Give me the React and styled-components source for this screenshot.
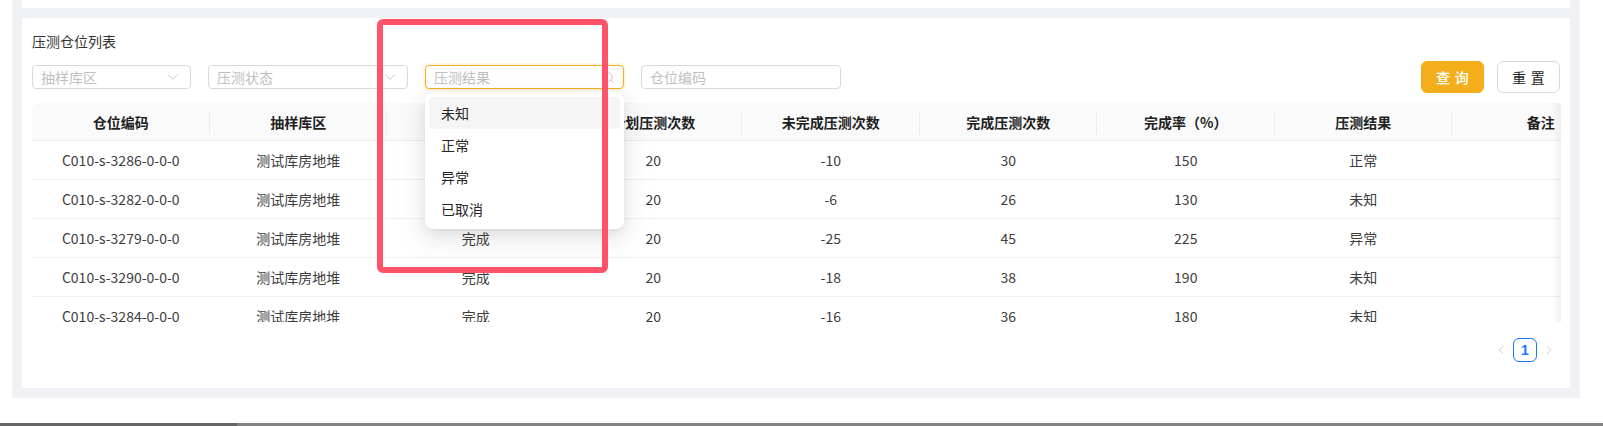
import styled, { createGlobalStyle } from "styled-components";
import { ChevronDown, ChevronLeft, ChevronRight, Search } from "lucide-react";

const GlobalStyle = createGlobalStyle`
  body {
    margin: 0;
    background: #fff;
    font-family: "Noto Sans CJK SC", "Noto Sans", sans-serif;
    font-size: 14px;
    color: #333;
  }
`;

const Shell = styled.div`
  width: 1548px;
  margin-left: 12px;
  padding: 0 10px 10px;
  background: #f0f1f5;
  display: flex;
  flex-direction: column;
  gap: 10px;
`;

const TopCard = styled.div`
  height: 8px;
  background: #fff;
`;

const Card = styled.section`
  position: relative;
  background: #fff;
  padding: 12px 10px 10px;
`;

const Title = styled.div`
  line-height: 22px;
  color: #333;
`;

const FilterRow = styled.div`
  display: flex;
  align-items: center;
  height: 32px;
  margin-top: 9px;
  gap: 17px;
`;

const Field = styled.div`
  position: relative;
  box-sizing: border-box;
  width: ${(p) => p.$w}px;
  height: 24px;
  display: flex;
  align-items: center;
  justify-content: space-between;
  padding: 0 8px 0 8px;
  border: 1px solid ${(p) => (p.$focus ? "#f5ad1f" : "#d9d9d9")};
  box-shadow: ${(p) => (p.$focus ? "0 0 0 2px rgba(245,173,31,0.12)" : "none")};
  border-radius: 4px;
  color: #bfbfbf;
  line-height: 22px;
  svg {
    color: #c4c4c4;
    flex: none;
  }
`;

const Buttons = styled.div`
  margin-left: auto;
  display: flex;
  gap: 13px;
`;

const Button = styled.button`
  box-sizing: border-box;
  height: 32px;
  width: 63px;
  border-radius: 6px;
  font-family: inherit;
  font-size: 14px;
  letter-spacing: 0.34em;
  text-indent: 0.34em;
  cursor: pointer;
  border: 1px solid ${(p) => (p.$primary ? "#f5ae1b" : "#d9d9d9")};
  background: ${(p) => (p.$primary ? "#f5ae1b" : "#fff")};
  color: ${(p) => (p.$primary ? "#fff" : "#262626")};
  font-weight: ${(p) => (p.$primary ? 500 : 400)};
`;

const Dropdown = styled.div`
  position: absolute;
  top: 27px;
  left: -1px;
  width: 199px;
  padding: 4px;
  box-sizing: border-box;
  background: #fff;
  border-radius: 8px;
  box-shadow: 0 6px 16px 0 rgba(0, 0, 0, 0.08), 0 3px 6px -4px rgba(0, 0, 0, 0.12),
    0 9px 28px 8px rgba(0, 0, 0, 0.05);
  z-index: 5;
`;

const Option = styled.div`
  height: 32px;
  line-height: 32px;
  padding: 0 12px;
  border-radius: 4px;
  color: #262626;
  background: ${(p) => (p.$active ? "#f5f5f5" : "transparent")};
`;

const TableWrap = styled.div`
  position: relative;
  margin-top: 10px;
  width: 1529px;
  overflow: hidden;
  border-radius: 8px 0 0 0;
`;

const Inner = styled.div`
  width: 1597.5px;
`;

const Row = styled.div`
  display: grid;
  grid-template-columns: repeat(9, 177.5px);
  height: 39px;
  box-sizing: border-box;
  border-bottom: 1px solid #f0f0f0;
  align-items: center;
`;

const HeadRow = styled(Row)`
  height: 38px;
  background: #fafafa;
`;

const HeadCell = styled.div`
  position: relative;
  text-align: center;
  font-weight: 600;
  color: #1f1f1f;
  &::after {
    content: "";
    display: ${(p) => (p.$last ? "none" : "block")};
    position: absolute;
    right: 0;
    top: 50%;
    height: 23px;
    margin-top: -11px;
    width: 1px;
    background: #ececec;
  }
`;

const Cell = styled.div`
  text-align: center;
  color: #3d3d3d;
`;

const BodyView = styled.div`
  height: 181px;
  overflow: hidden;
`;

const EdgeShadow = styled.div`
  position: absolute;
  top: 0;
  right: 0;
  bottom: 0;
  width: 10px;
  background: linear-gradient(to right, rgba(0, 0, 0, 0), rgba(0, 0, 0, 0.05));
  pointer-events: none;
`;

const Pager = styled.div`
  display: flex;
  justify-content: flex-end;
  margin: 16px -1px 16px 0;
  height: 24px;
`;

const PageArrow = styled.span`
  width: 24px;
  height: 24px;
  display: flex;
  align-items: center;
  justify-content: center;
  color: #c4c4c4;
`;

const PageItem = styled.span`
  box-sizing: border-box;
  width: 24px;
  height: 24px;
  border: 1px solid #1677ff;
  border-radius: 6px;
  color: #1677ff;
  font-weight: 600;
  font-size: 14px;
  display: flex;
  align-items: center;
  justify-content: center;
  font-family: "Liberation Sans", sans-serif;
`;

const Annotation = styled.div`
  position: absolute;
  left: 355px;
  top: 1px;
  width: 231px;
  height: 254px;
  box-sizing: border-box;
  border: 6px solid #fd5469;
  border-radius: 6px;
  pointer-events: none;
  z-index: 10;
`;

const BottomBar = styled.div`
  margin-top: 25px;
  height: 3px;
  display: flex;
  background: #828282;
  &::before {
    content: "";
    width: 237px;
    background: #666;
  }
`;

const columns = [
  "仓位编码",
  "抽样库区",
  "压测状态",
  "计划压测次数",
  "未完成压测次数",
  "完成压测次数",
  "完成率（%）",
  "压测结果",
  "备注",
];

const rows = [
  ["C010-s-3286-0-0-0", "测试库房地堆", "完成", "20", "-10", "30", "150", "正常", ""],
  ["C010-s-3282-0-0-0", "测试库房地堆", "完成", "20", "-6", "26", "130", "未知", ""],
  ["C010-s-3279-0-0-0", "测试库房地堆", "完成", "20", "-25", "45", "225", "异常", ""],
  ["C010-s-3290-0-0-0", "测试库房地堆", "完成", "20", "-18", "38", "190", "未知", ""],
  ["C010-s-3284-0-0-0", "测试库房地堆", "完成", "20", "-16", "36", "180", "未知", ""],
];

const options = ["未知", "正常", "异常", "已取消"];

export default function App() {
  return (
    <>
      <GlobalStyle />
      <Shell>
        <TopCard />
        <Card>
          <Title>压测仓位列表</Title>
          <FilterRow>
            <Field $w={159}>
              抽样库区
              <ChevronDown size={18} strokeWidth={1.2} />
            </Field>
            <Field $w={200}>
              压测状态
              <ChevronDown size={18} strokeWidth={1.2} />
            </Field>
            <Field $w={199} $focus>
              压测结果
              <Search size={13} strokeWidth={1.6} />
              <Dropdown>
                {options.map((o, i) => (
                  <Option key={o} $active={i === 0}>
                    {o}
                  </Option>
                ))}
              </Dropdown>
            </Field>
            <Field $w={200}>仓位编码</Field>
            <Buttons>
              <Button $primary>查询</Button>
              <Button>重置</Button>
            </Buttons>
          </FilterRow>
          <TableWrap>
            <Inner>
              <HeadRow>
                {columns.map((c, i) => (
                  <HeadCell key={c} $last={i === columns.length - 1}>
                    {c}
                  </HeadCell>
                ))}
              </HeadRow>
              <BodyView>
                {rows.map((r) => (
                  <Row key={r[0]}>
                    {r.map((v, i) => (
                      <Cell key={i}>{v}</Cell>
                    ))}
                  </Row>
                ))}
              </BodyView>
            </Inner>
            <EdgeShadow />
          </TableWrap>
          <Pager>
            <PageArrow>
              <ChevronLeft size={14} strokeWidth={1.5} />
            </PageArrow>
            <PageItem>1</PageItem>
            <PageArrow>
              <ChevronRight size={14} strokeWidth={1.5} />
            </PageArrow>
          </Pager>
          <Annotation />
        </Card>
      </Shell>
      <BottomBar />
    </>
  );
}
